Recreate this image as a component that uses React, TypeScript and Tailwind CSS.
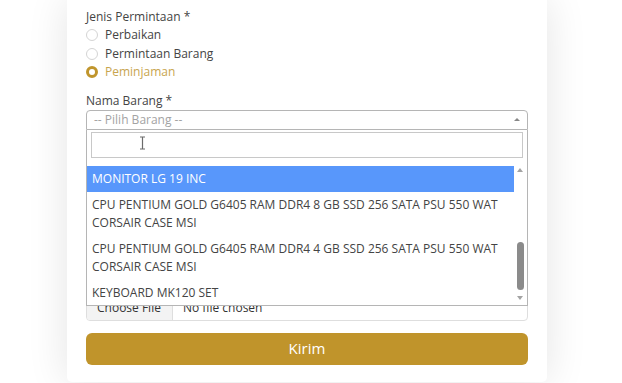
import React from "react";

const font = { fontFamily: '"Open Sans", "Noto Sans", sans-serif' };

function Radio({ label, checked }: { label: string; checked?: boolean }) {
  return (
    <div className="flex h-[18.5px] items-center">
      <span
        className={
          checked
            ? "box-border h-[12px] w-[12px] rounded-full border-[3.5px] border-[#c0952c] bg-white"
            : "box-border h-[12px] w-[12px] rounded-full border border-[#d4d4d4] bg-white"
        }
      />
      <span className={checked ? "ml-[7px] text-[12px] leading-[18px] text-[#c8a54f]" : "ml-[7px] text-[12px] leading-[18px] text-[#444]"}>
        {label}
      </span>
    </div>
  );
}

function Option({ text, active }: { text: string; active?: boolean }) {
  return (
    <div
      className={
        active
          ? "bg-[#5897fb] pl-[5px] pr-[2px] py-[4px] text-[12px] leading-[18px] text-white"
          : "pl-[5px] pr-[2px] py-[4px] text-[12px] leading-[18px] text-[#444]"
      }
    >
      {text}
    </div>
  );
}

export default function App() {
  return (
    <div className="h-[383px] w-[622px] overflow-hidden bg-white" style={font}>
      <div className="ml-[67px] w-[480px] rounded-b-[5px] bg-white px-[19px] pb-[17px] pt-[8px] shadow-[0_0_42px_rgba(0,0,0,0.11)]">
        <div className="text-[12px] leading-[18px] text-[#444]">Jenis Permintaan *</div>
        <Radio label="Perbaikan" />
        <Radio label="Permintaan Barang" />
        <Radio label="Peminjaman" checked />

        <div className="mt-[10px] text-[12px] leading-[18px] text-[#444]">Nama Barang *</div>
        <div className="relative">
          <div className="flex h-[20px] items-center justify-between rounded-t-[4px] border border-[#b5b5b5] bg-white pl-[7px] pr-[7px]">
            <span className="text-[12px] leading-[18px] text-[#a3a3a3]">-- Pilih Barang --</span>
            <span className="h-0 w-0 border-x-[3px] border-b-[3px] border-x-transparent border-b-[#888]" />
          </div>

          <div className="mt-[28px] h-[100px] rounded-[4px] border border-[#ddd]" />
          <div className="mt-[36px] flex h-[27px] items-center overflow-hidden rounded-[4px] border border-[#dedede]">
            <div className="flex h-full w-[86px] items-center border-r border-[#dedede] bg-[#f3f3f3] pl-[10px] pt-[1px] text-[12px] text-[#333]">
              Choose File
            </div>
            <div className="pl-[10px] pt-[1px] text-[12px] text-[#333]">No file chosen</div>
          </div>

          <div className="absolute left-0 right-0 top-[20px] border-x border-b border-[#b5b5b5] bg-white">
            <div className="px-[4px] pb-[8px] pt-[2px]">
              <div className="relative h-[26px] border border-[#c8c8c8] bg-white">
                <svg className="absolute left-[47px] top-[3px]" width="7" height="14" viewBox="0 0 7 14">
                  <path d="M1 1h5M3.5 1v12M1 13h5" stroke="#6b6b6b" strokeWidth="1.2" fill="none" />
                </svg>
              </div>
            </div>
            <div className="relative flex h-[139px] overflow-hidden">
              <div className="flex-1">
                <Option text="MONITOR LG 19 INC" active />
                <Option text="CPU PENTIUM GOLD G6405 RAM DDR4 8 GB SSD 256 SATA PSU 550 WAT CORSAIR CASE MSI" />
                <Option text="CPU PENTIUM GOLD G6405 RAM DDR4 4 GB SSD 256 SATA PSU 550 WAT CORSAIR CASE MSI" />
                <Option text="KEYBOARD MK120 SET" />
              </div>
              <div className="relative w-[13px] bg-white">
                <span className="absolute left-[3px] top-[2px] h-0 w-0 border-x-[3.5px] border-b-[4px] border-x-transparent border-b-[#a3a3a3]" />
                <span className="absolute left-[2.5px] top-[76px] h-[48px] w-[7px] rounded-full bg-[#8b8b8b]" />
                <span className="absolute bottom-[5px] left-[3px] h-0 w-0 border-x-[3.5px] border-t-[4px] border-x-transparent border-t-[#a3a3a3]" />
              </div>
            </div>
          </div>
        </div>

        <button className="mt-[12px] flex h-[32px] w-full items-center justify-center rounded-[6px] bg-[#c0942b] text-[15px] text-white">
          Kirim
        </button>
      </div>
    </div>
  );
}
